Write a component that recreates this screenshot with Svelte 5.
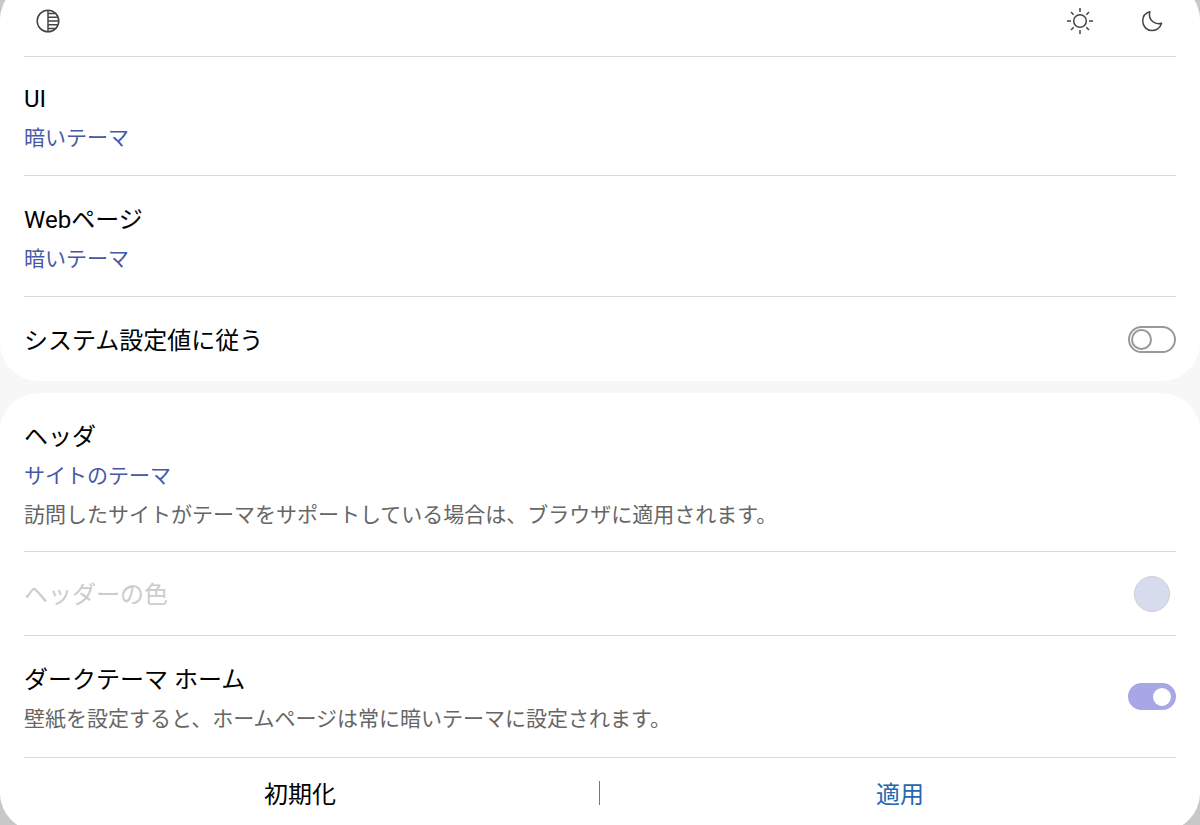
<script>
  let followSystem = $state(false);
  let darkHome = $state(true);
</script>

<main>
  <div class="sheet">
    <section class="card">
      <div class="modes">
        <button class="icon" type="button" aria-label="コントラスト">
          <svg width="24" height="24" viewBox="0 0 24 24">
            <circle cx="12" cy="12" r="10.8" />
            <path d="M12 1v22M12 4.5h7.5M12 8.2h10M12 12h10.8M12 15.8h10M12 19.5h7.5" />
          </svg>
        </button>
        <div class="right">
          <button class="icon" type="button" aria-label="明るい">
            <svg width="28" height="28" viewBox="0 0 28 28">
              <circle cx="14" cy="14" r="6.3" />
              <path d="M14 1v4M14 23v4M1 14h4M23 14h4M5 5l2.7 2.7M20.3 20.3L23 23M5 23l2.7-2.7M20.3 7.7L23 5" />
            </svg>
          </button>
          <button class="icon" type="button" aria-label="暗い">
            <svg width="24" height="24" viewBox="0 0 24 24">
              <path d="M9.8 2.8C5.5 4 2.7 7.7 2.7 12.1C2.7 17.5 6.9 21.6 12 21.6C16.4 21.6 20.3 18.6 21.5 14.3C15.5 16.2 7.8 11.5 9.8 2.8Z" />
            </svg>
          </button>
        </div>
      </div>
      <button class="row compact" type="button">
        <span class="text">
          <span class="title">UI</span>
          <span class="value">暗いテーマ</span>
        </span>
      </button>
      <button class="row" type="button">
        <span class="text">
          <span class="title">Webページ</span>
          <span class="value">暗いテーマ</span>
        </span>
      </button>
      <label class="row single last">
        <span class="text"><span class="title">システム設定値に従う</span></span>
        <input class="switch" type="checkbox" bind:checked={followSystem} />
      </label>
    </section>

    <section class="card">
      <button class="row" type="button">
        <span class="text">
          <span class="title">ヘッダ</span>
          <span class="value">サイトのテーマ</span>
          <span class="desc">訪問したサイトがテーマをサポートしている場合は、ブラウザに適用されます。</span>
        </span>
      </button>
      <button class="row single" type="button" disabled>
        <span class="text"><span class="title">ヘッダーの色</span></span>
        <span class="swatch"></span>
      </button>
      <label class="row tall">
        <span class="text">
          <span class="title">ダークテーマ ホーム</span>
          <span class="desc">壁紙を設定すると、ホームページは常に暗いテーマに設定されます。</span>
        </span>
        <input class="switch" type="checkbox" bind:checked={darkHome} />
      </label>
      <footer>
        <button type="button">初期化</button>
        <span class="divider"></span>
        <button class="apply" type="button">適用</button>
      </footer>
    </section>
  </div>
</main>

<style>
  :global(body) {
    background: #c8c8c8;
  }

  main {
    overflow: hidden;
    font-family: Roboto, "Noto Sans CJK JP", sans-serif;
    color: #000;
  }

  .sheet {
    display: flex;
    flex-direction: column;
    gap: 12px;
    margin: -18px 0 -6px;
    border-radius: 38px;
    background: #f7f7f7;
    overflow: hidden;
  }

  .card {
    padding: 0 24px;
    border-radius: 38px;
    background: #fff;
  }

  button {
    padding: 0;
    border: none;
    background: none;
    font: inherit;
    color: inherit;
    text-align: left;
    cursor: pointer;
  }

  .modes {
    display: flex;
    justify-content: space-between;
    padding: 15px 0 11px;
    border-bottom: 1px solid #d9d9d9;
  }

  .right {
    display: flex;
    gap: 24px;
  }

  .icon {
    display: flex;
    align-items: center;
    justify-content: center;
    width: 48px;
    height: 48px;
  }

  svg {
    fill: none;
    stroke: #444;
    stroke-width: 1.5;
    stroke-linejoin: round;
  }

  .row {
    display: flex;
    align-items: center;
    justify-content: space-between;
    box-sizing: border-box;
    width: 100%;
    min-height: 84px;
    border-bottom: 1px solid #d9d9d9;
  }

  .text {
    display: flex;
    flex-direction: column;
    padding: 25px 0 17px;
  }

  .compact .text {
    padding: 23px 0 17px;
  }

  .single .text {
    padding: 22px 0 18px;
  }

  .tall .text {
    padding: 25px 0 19px;
  }

  .last {
    border-bottom: none;
  }

  .title {
    font-size: 24px;
    line-height: 39px;
  }

  .value,
  .desc {
    font-size: 21px;
    line-height: 39px;
  }

  .value {
    color: #4659a5;
  }

  .desc {
    line-height: 38px;
    color: #666;
  }

  .row:disabled {
    color: #ccc;
    cursor: default;
  }

  .swatch {
    box-sizing: border-box;
    width: 36px;
    height: 36px;
    margin-right: 6px;
    border: 1px solid #d0d0d4;
    border-radius: 50%;
    background: #d6dbed;
  }

  .switch {
    appearance: none;
    display: flex;
    align-items: center;
    flex: none;
    box-sizing: border-box;
    width: 48px;
    height: 27px;
    margin: 0;
    padding: 0 1px;
    border: 2px solid #999;
    border-radius: 14px;
  }

  .switch::before {
    content: "";
    box-sizing: border-box;
    width: 21px;
    height: 21px;
    border: 2px solid #999;
    border-radius: 50%;
  }

  .switch:checked {
    justify-content: flex-end;
    border-color: #a7a7e8;
    background: #a7a7e8;
  }

  .switch:checked::before {
    width: 18px;
    height: 18px;
    margin-right: 2px;
    border: none;
    background: #fff;
  }

  footer {
    display: flex;
    align-items: center;
    box-sizing: border-box;
    height: 73px;
    margin: 0 -24px;
    padding-bottom: 4px;
    font-size: 24px;
  }

  footer button {
    flex: 1;
    height: 100%;
    text-align: center;
  }

  .divider {
    width: 1px;
    height: 24px;
    margin-left: -1px;
    background: #777;
  }

  .apply {
    color: #2866b0;
  }
</style>
